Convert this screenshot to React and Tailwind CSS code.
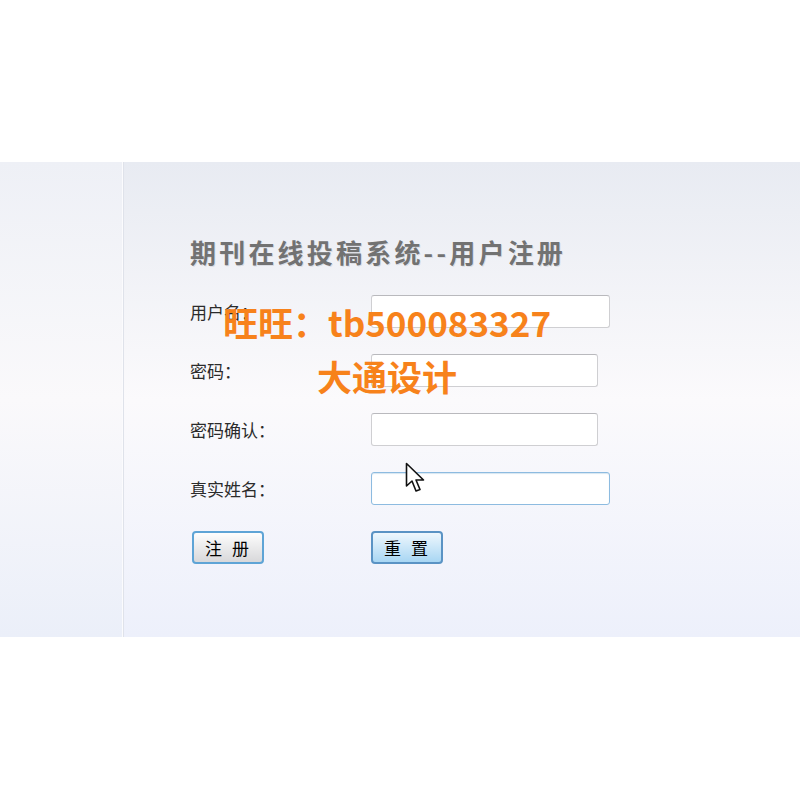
import { useState } from "react";

const cjk = { fontFamily: '"Noto Sans CJK SC", "Noto Sans", sans-serif' };

function Field({ label, width, focused }) {
  return (
    <>
      <label className="text-[17px] leading-[32px] text-[#2b2b2b]">{label}</label>
      <input
        type="text"
        className={
          "h-[33px] rounded-[3px] border bg-white outline-none " +
          width +
          (focused
            ? " border-[#8dbbe0] shadow-[inset_0_1px_1px_rgba(120,170,210,0.3)]"
            : " border-[#cfcfd2] border-t-[#b9b9bd]")
        }
      />
    </>
  );
}

function Cursor() {
  return (
    <svg width="22" height="32" viewBox="0 0 22 32" className="absolute left-[405px] top-[300px]">
      <path
        d="M1.5 1.5 L1.5 24 L7 19 L11 29 L15 27.5 L11 18 L18.5 18 Z"
        fill="#fff"
        stroke="#111"
        strokeWidth="1.6"
        strokeLinejoin="round"
      />
    </svg>
  );
}

export default function App() {
  const [form] = useState({ user: "", pwd: "" });

  return (
    <div className="w-[800px] h-[800px] bg-white flex flex-col" style={cjk}>
      <div className="h-[162px]" />

      <div className="h-[475px] flex relative">
        {/* left strip */}
        <div className="w-[122px] bg-gradient-to-b from-[#eef0f6] via-[#faf9fb] to-[#ebeff9]" />
        <div className="w-[1px] bg-[#fbfbfd]" />
        <div className="w-[1px] bg-[#dfe2ea]" />

        {/* main area */}
        <div className="flex-1 pl-[66px] pt-[74px] bg-gradient-to-b from-[#e8ebf2] via-[#fbfafc] to-[#edf0fb]">
          <h1 className="text-[26px] leading-[32px] font-bold tracking-[3.2px] text-[#727272] [text-shadow:1px_1px_0_rgba(80,90,110,0.15)]">
            期刊在线投稿系统--用户注册
          </h1>

          <form className="mt-[27px] grid grid-cols-[181px_auto] gap-y-[26px] items-center justify-start">
            <Field label="用户名：" width="w-[239px]" />
            <Field label="密码：" width="w-[227px]" />
            <Field label="密码确认：" width="w-[227px]" />
            <Field label="真实姓名：" width="w-[239px]" focused />

            <div>
              <button
                type="submit"
                className="ml-[2px] w-[72px] h-[33px] rounded-[4px] border-2 border-[#5ea4d6] bg-gradient-to-b from-[#fdfdfd] to-[#d8d8da] text-[17px] text-black tracking-[10px] pl-[8px]"
              >
                注册
              </button>
            </div>
            <div>
              <button
                type="reset"
                className="w-[72px] h-[33px] rounded-[4px] border-2 border-[#5a93c4] bg-gradient-to-b from-[#eef7fd] to-[#a8d6f3] text-[17px] text-black tracking-[10px] pl-[8px]"
              >
                重置
              </button>
            </div>
          </form>
        </div>

        {/* watermark over the form */}
        <div className="absolute left-[220px] top-[133px] w-[334px] flex flex-col items-center text-[35px] leading-[54px] font-bold text-[#f7821b]">
          <span className="whitespace-nowrap">旺旺：tb500083327</span>
          <span>大通设计</span>
        </div>

        <Cursor />
      </div>

      <div className="flex-1" />
      <span className="hidden">{form.user}</span>
    </div>
  );
}
